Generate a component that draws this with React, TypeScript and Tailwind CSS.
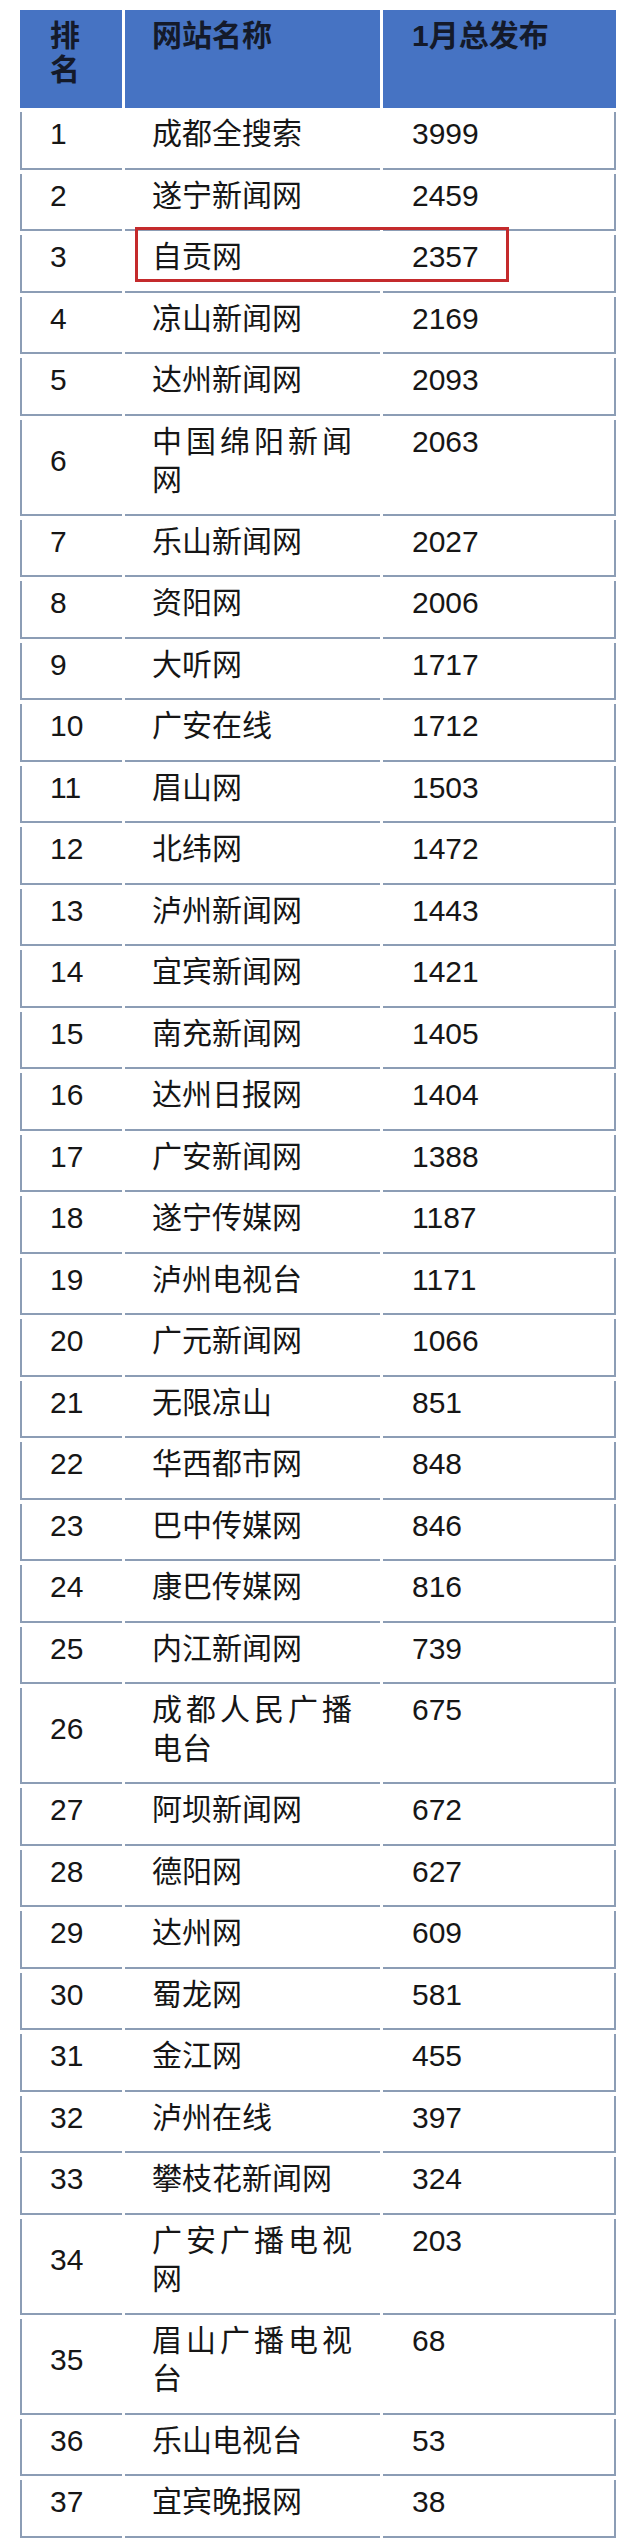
import React from "react"

const rows: [number, string, number][] = [
    [1, "成都全搜索", 3999],
    [2, "遂宁新闻网", 2459],
    [3, "自贡网", 2357],
    [4, "凉山新闻网", 2169],
    [5, "达州新闻网", 2093],
    [6, "中国绵阳新闻网", 2063],
    [7, "乐山新闻网", 2027],
    [8, "资阳网", 2006],
    [9, "大听网", 1717],
    [10, "广安在线", 1712],
    [11, "眉山网", 1503],
    [12, "北纬网", 1472],
    [13, "泸州新闻网", 1443],
    [14, "宜宾新闻网", 1421],
    [15, "南充新闻网", 1405],
    [16, "达州日报网", 1404],
    [17, "广安新闻网", 1388],
    [18, "遂宁传媒网", 1187],
    [19, "泸州电视台", 1171],
    [20, "广元新闻网", 1066],
    [21, "无限凉山", 851],
    [22, "华西都市网", 848],
    [23, "巴中传媒网", 846],
    [24, "康巴传媒网", 816],
    [25, "内江新闻网", 739],
    [26, "成都人民广播电台", 675],
    [27, "阿坝新闻网", 672],
    [28, "德阳网", 627],
    [29, "达州网", 609],
    [30, "蜀龙网", 581],
    [31, "金江网", 455],
    [32, "泸州在线", 397],
    [33, "攀枝花新闻网", 324],
    [34, "广安广播电视网", 203],
    [35, "眉山广播电视台", 68],
    [36, "乐山电视台", 53],
    [37, "宜宾晚报网", 38],
]

export default function App() {
    return (
        <div className="min-h-[2541px] bg-white pt-[10px] pl-[20px] font-['Liberation_Sans','Noto_Sans_CJK_SC',sans-serif] text-[30px] text-[#161616]">
            <div className="relative w-[596px]">
                <div className="grid grid-cols-[102px_255px_233px] gap-x-[3px] gap-y-[4px] leading-[38.5px]">
                    {/* header */}
                    <div className="h-[98px] bg-[#4673c3] pl-[30px] pt-[9px] font-bold leading-[34px] text-[#141a2a]">
                        排<br />名
                    </div>
                    <div className="h-[98px] bg-[#4673c3] pl-[27px] pt-[9px] font-bold leading-[34px] text-[#141a2a]">
                        网站名称
                    </div>
                    <div className="h-[98px] bg-[#4673c3] pl-[29px] pt-[9px] font-bold leading-[34px] text-[#141a2a]">
                        1月总发布
                    </div>

                    {rows.map(([rank, name, total]) => (
                        <React.Fragment key={rank}>
                            <div className="flex items-center border-b-2 border-l-2 border-[#8c9db5] pl-[28px] pt-[3px] pb-[14px]">
                                {rank}
                            </div>
                            <div className="border-b-2 border-[#8c9db5] pl-[27px] pr-[28px] pt-[3px] pb-[14px] text-justify">
                                {name}
                            </div>
                            <div className="border-b-2 border-r-2 border-[#8c9db5] pl-[29px] pt-[3px] pb-[14px]">
                                {total}
                            </div>
                        </React.Fragment>
                    ))}
                </div>

                {/* highlight around row 3 */}
                <div className="pointer-events-none absolute left-[115px] top-[217px] h-[55px] w-[374px] border-[3px] border-[#c42a2c]" />
            </div>
        </div>
    )
}
